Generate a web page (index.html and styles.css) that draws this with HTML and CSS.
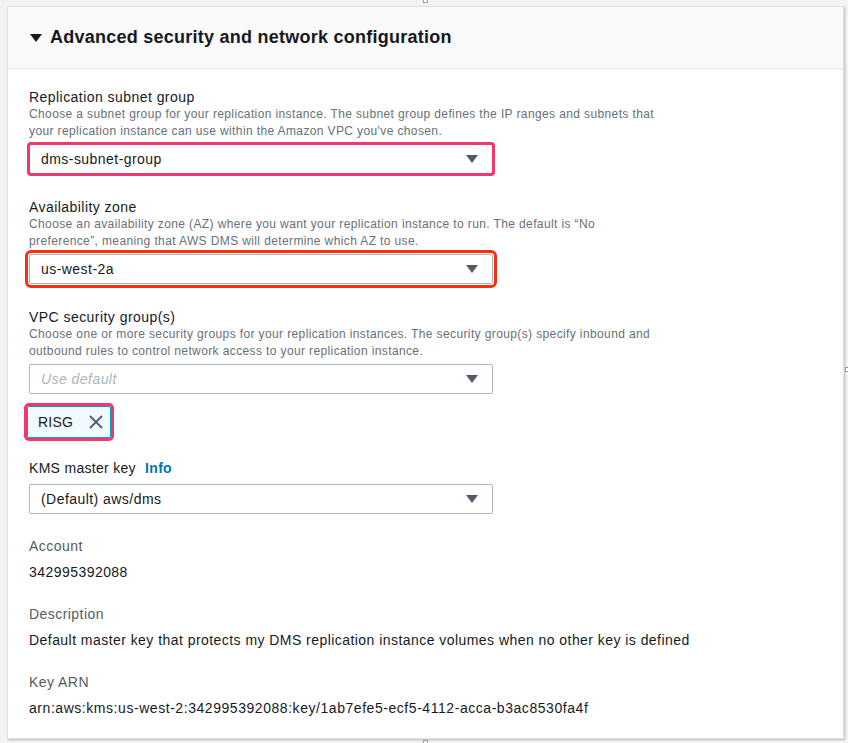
FILE: index.html
```html
<!DOCTYPE html>
<html lang="en">
<head>
<meta charset="utf-8">
<title>Advanced security and network configuration</title>
<link rel="stylesheet" href="styles.css">
</head>
<body>
<span class="handle handle-top"></span>
<span class="handle handle-right"></span>
<span class="handle handle-bottom"></span>
<section class="card">
  <header class="card-header">
    <span class="caret"></span>
    <h2 class="title">Advanced security and network configuration</h2>
  </header>
  <div class="card-body">
    <div class="field">
      <div class="label">Replication subnet group</div>
      <div class="desc">Choose a subnet group for your replication instance. The subnet group defines the IP ranges and subnets that your replication instance can use within the Amazon VPC you've chosen.</div>
      <div class="select hl-pink">
        <span class="value">dms-subnet-group</span>
        <span class="arrow"></span>
      </div>
    </div>

    <div class="field">
      <div class="label">Availability zone</div>
      <div class="desc">Choose an availability zone (AZ) where you want your replication instance to run. The default is “No preference”, meaning that AWS DMS will determine which AZ to use.</div>
      <div class="select hl-red">
        <span class="value">us-west-2a</span>
        <span class="arrow"></span>
      </div>
    </div>

    <div class="field field-vpc">
      <div class="label">VPC security group(s)</div>
      <div class="desc">Choose one or more security groups for your replication instances. The security group(s) specify inbound and outbound rules to control network access to your replication instance.</div>
      <div class="select">
        <span class="value placeholder">Use default</span>
        <span class="arrow"></span>
      </div>
      <div class="tags">
        <div class="token">
          <span class="token-text">RISG</span>
          <svg class="token-x" width="14" height="14" viewBox="0 0 14 14"><path d="M1 1L13 13M13 1L1 13" stroke="#545b64" stroke-width="1.8" fill="none"/></svg>
        </div>
      </div>
    </div>

    <div class="field field-kms">
      <div class="label">KMS master key <a class="info">Info</a></div>
      <div class="select">
        <span class="value">(Default) aws/dms</span>
        <span class="arrow"></span>
      </div>
    </div>

    <div class="kv">
      <div class="kv-key">Account</div>
      <div class="kv-val">342995392088</div>
    </div>
    <div class="kv">
      <div class="kv-key">Description</div>
      <div class="kv-val">Default master key that protects my DMS replication instance volumes when no other key is defined</div>
    </div>
    <div class="kv">
      <div class="kv-key">Key ARN</div>
      <div class="kv-val kv-arn">arn:aws:kms:us-west-2:342995392088:key/1ab7efe5-ecf5-4112-acca-b3ac8530fa4f</div>
    </div>
  </div>
</section>
</body>
</html>
```

FILE: styles.css
```css
* { box-sizing: border-box; }
html, body { margin: 0; padding: 0; }
body {
  background: #f2f3f3;
  font-family: "Liberation Sans", Arial, sans-serif;
  color: #16191f;
  width: 848px;
  height: 743px;
  overflow: hidden;
  position: relative;
  letter-spacing: 0.45px;
}
.handle {
  position: absolute;
  width: 5px;
  height: 5px;
  border: 1px solid #9a9a9a;
  background: #fff;
}
.handle-top { left: 423px; top: -2px; }
.handle-bottom { left: 423px; top: 740px; }
.handle-right { left: 845px; top: 367px; }

.card {
  margin: 6px 0 0 7px;
  width: 837px;
  height: 733px;
  background: #fff;
  border: 1px solid #dfe3e3;
  box-shadow: 1px 1px 2px rgba(0,0,0,0.25);
}
.card-header {
  height: 62px;
  background: #fafafa;
  border-bottom: 1px solid #e3e6e6;
  display: flex;
  align-items: center;
  padding-left: 22px;
}
.caret {
  width: 0;
  height: 0;
  border-left: 6px solid transparent;
  border-right: 6px solid transparent;
  border-top: 8px solid #16191f;
  margin-right: 8px;
  margin-top: 1px;
}
.title {
  margin: 0;
  font-size: 18px;
  font-weight: 700;
  color: #16191f;
  letter-spacing: 0.25px;
}
.card-body {
  padding: 20px 21px 0 21px;
}
.field { margin-bottom: 25px; }
.field-vpc { margin-bottom: 20px; }
.label {
  font-size: 14px;
  line-height: 17px;
  color: #16191f;
}
.desc {
  font-size: 12px;
  line-height: 17px;
  color: #687078;
  width: 630px;
  letter-spacing: 0.38px;
}
.select {
  margin-top: 4px;
  width: 464px;
  height: 30px;
  border: 1px solid #aab7b8;
  border-radius: 2px;
  display: flex;
  align-items: center;
  justify-content: space-between;
  padding: 0 14px 0 11px;
  font-size: 14px;
  color: #16191f;
  background: #fff;
}
.placeholder { color: #aab7b8; font-style: italic; }
.arrow {
  width: 0;
  height: 0;
  border-left: 6px solid transparent;
  border-right: 6px solid transparent;
  border-top: 8px solid #545b64;
}
.hl-pink {
  outline: 3px solid #f0386f;
  outline-offset: -1px;
}
.hl-red {
  outline: 3px solid #f9300e;
  outline-offset: 1px;
}
.tags { margin-top: 12px; display: flex; }
.token {
  margin-left: -2px;
  height: 32px;
  width: 84px;
  display: flex;
  align-items: center;
  justify-content: space-between;
  padding: 0 7px 0 10px;
  background: #f1faff;
  border: 1px solid #00a1c9;
  border-radius: 2px;
  font-size: 14px;
  letter-spacing: 0.2px;
  outline: 3px solid #f0386f;
  outline-offset: 0px;
}
.token-x { display: block; }
.field-kms { margin-bottom: 24px; }
.field-kms .label { margin-bottom: 6px; line-height: 20px; letter-spacing: 0.3px; }
.field-kms .select { margin-top: 0; }
.info {
  color: #0073bb;
  font-weight: 700;
  margin-left: 5px;
}
.kv { margin-bottom: 25px; }
.kv-key {
  font-size: 14px;
  line-height: 17px;
  color: #545b64;
}
.kv-val {
  margin-top: 9px;
  font-size: 14px;
  line-height: 17px;
  color: #16191f;
}
.kv-arn { letter-spacing: 0.55px; }
```
